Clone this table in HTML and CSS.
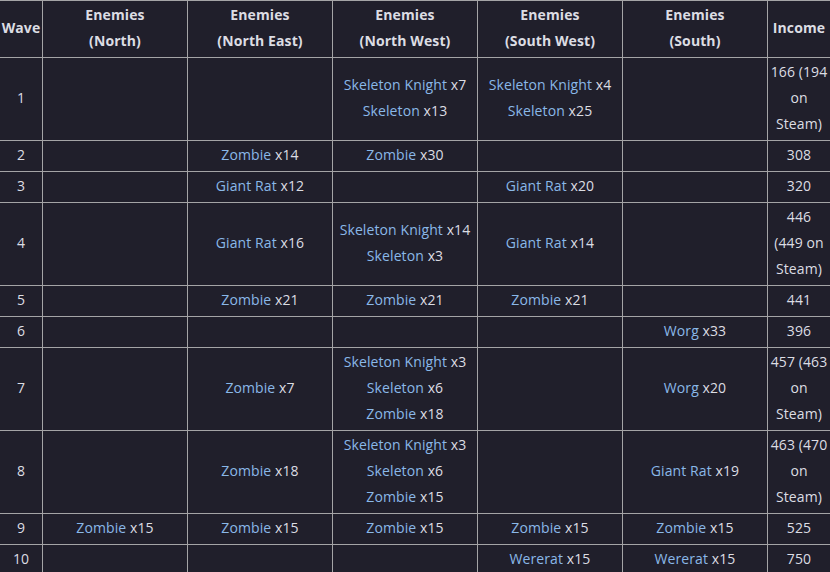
FILE: index.html
```html
<!DOCTYPE html>
<html>
<head>
<meta charset="utf-8">
<link rel="stylesheet" href="styles.css">
</head>
<body>
<table class="waves">
  <thead>
    <tr>
      <th class="c-wave">Wave</th>
      <th class="c-en">Enemies<br>(North)</th>
      <th class="c-en">Enemies<br>(North East)</th>
      <th class="c-en">Enemies<br>(North West)</th>
      <th class="c-en">Enemies<br>(South West)</th>
      <th class="c-en">Enemies<br>(South)</th>
      <th class="c-inc">Income</th>
    </tr>
  </thead>
  <tbody>
    <tr>
      <td>1</td>
      <td></td>
      <td></td>
      <td><a>Skeleton Knight</a> x7<br><a>Skeleton</a> x13</td>
      <td><a>Skeleton Knight</a> x4<br><a>Skeleton</a> x25</td>
      <td></td>
      <td class="inc">166 (194<br>on<br>Steam)</td>
    </tr>
    <tr>
      <td>2</td>
      <td></td>
      <td><a>Zombie</a> x14</td>
      <td><a>Zombie</a> x30</td>
      <td></td>
      <td></td>
      <td class="inc">308</td>
    </tr>
    <tr>
      <td>3</td>
      <td></td>
      <td><a>Giant Rat</a> x12</td>
      <td></td>
      <td><a>Giant Rat</a> x20</td>
      <td></td>
      <td class="inc">320</td>
    </tr>
    <tr>
      <td>4</td>
      <td></td>
      <td><a>Giant Rat</a> x16</td>
      <td><a>Skeleton Knight</a> x14<br><a>Skeleton</a> x3</td>
      <td><a>Giant Rat</a> x14</td>
      <td></td>
      <td class="inc">446<br>(449 on<br>Steam)</td>
    </tr>
    <tr>
      <td>5</td>
      <td></td>
      <td><a>Zombie</a> x21</td>
      <td><a>Zombie</a> x21</td>
      <td><a>Zombie</a> x21</td>
      <td></td>
      <td class="inc">441</td>
    </tr>
    <tr>
      <td>6</td>
      <td></td>
      <td></td>
      <td></td>
      <td></td>
      <td><a>Worg</a> x33</td>
      <td class="inc">396</td>
    </tr>
    <tr>
      <td>7</td>
      <td></td>
      <td><a>Zombie</a> x7</td>
      <td><a>Skeleton Knight</a> x3<br><a>Skeleton</a> x6<br><a>Zombie</a> x18</td>
      <td></td>
      <td><a>Worg</a> x20</td>
      <td class="inc">457 (463<br>on<br>Steam)</td>
    </tr>
    <tr>
      <td>8</td>
      <td></td>
      <td><a>Zombie</a> x18</td>
      <td><a>Skeleton Knight</a> x3<br><a>Skeleton</a> x6<br><a>Zombie</a> x15</td>
      <td></td>
      <td><a>Giant Rat</a> x19</td>
      <td class="inc">463 (470<br>on<br>Steam)</td>
    </tr>
    <tr>
      <td>9</td>
      <td><a>Zombie</a> x15</td>
      <td><a>Zombie</a> x15</td>
      <td><a>Zombie</a> x15</td>
      <td><a>Zombie</a> x15</td>
      <td><a>Zombie</a> x15</td>
      <td class="inc">525</td>
    </tr>
    <tr>
      <td>10</td>
      <td></td>
      <td></td>
      <td></td>
      <td><a>Wererat</a> x15</td>
      <td><a>Wererat</a> x15</td>
      <td class="inc">750</td>
    </tr>
  </tbody>
</table>
</body>
</html>
```

FILE: styles.css
```css
html, body {
  margin: 0;
  padding: 0;
  background: #201f2b;
}

body {
  font-family: "Open Sans", "DejaVu Sans", sans-serif;
  font-size: 14px;
  line-height: 26px;
  color: #dcdde3;
  overflow: hidden;
}

.waves {
  border-collapse: separate;
  border-spacing: 0;
  table-layout: fixed;
  width: 830px;
  border-top: 1px solid #a4a4a6;
}

.waves th,
.waves td {
  box-sizing: border-box;
  padding: 1px 0 3px;
  text-align: center;
  vertical-align: middle;
  border-right: 1px solid #a4a4a6;
  border-bottom: 1px solid #a4a4a6;
  letter-spacing: 0.1px;
}

.waves th {
  font-weight: 700;
  color: #dcdde3;
}

.waves th:last-child,
.waves td:last-child {
  border-right: none;
}

.c-wave { width: 43px; }
.c-en { width: 145px; }
.c-inc { width: 62px; }

.inc {
  white-space: nowrap;
}

.waves a {
  color: #8ab8e8;
  text-decoration: none;
}
```
